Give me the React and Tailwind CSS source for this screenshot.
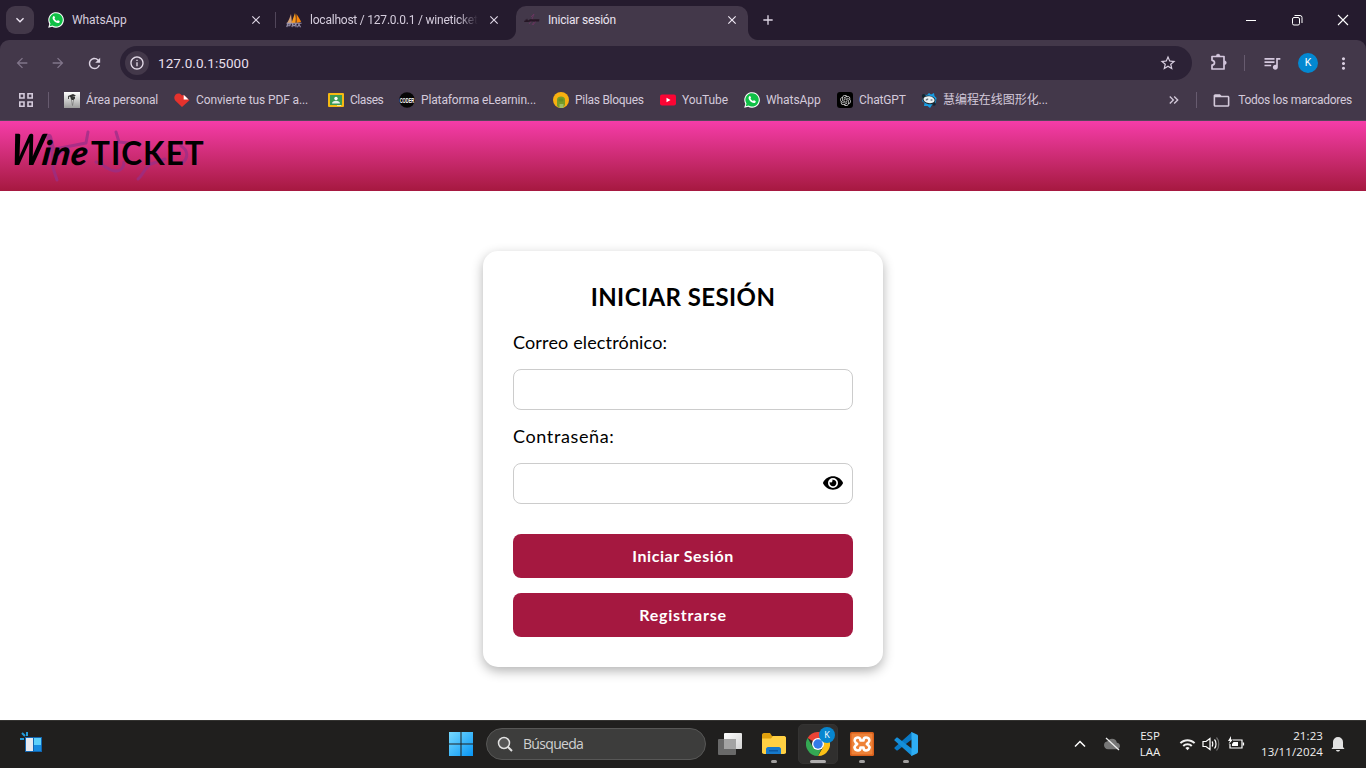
import React from 'react';
import {
  MdArrowBack, MdArrowForward, MdRefresh, MdInfoOutline, MdStarBorder,
  MdQueueMusic, MdMoreVert, MdKeyboardArrowDown, MdClose, MdAdd,
  MdKeyboardDoubleArrowRight, MdFolderOpen, MdWifi, MdCloud,
} from 'react-icons/md';
import { FaEye } from 'react-icons/fa';
import { RiOpenaiFill } from 'react-icons/ri';

const WhatsApp = () => (
  <svg viewBox="0 0 16 16" className="size-4 shrink-0">
    <path d="M0.2 15.8 1.3 11.9A7.8 7.8 0 1 1 4.2 14.8Z" fill="#fff" />
    <path d="M1.7 14.3 2.5 11.6A6.7 6.7 0 1 1 4.6 13.6Z" fill="#10c046" />
    <path d="M5.3 4.2c.5-.5 1-.3 1.2.2l.5 1.1c.1.4-.6.9-.5 1.2.5 1 1.3 1.8 2.4 2.3.4.1.8-.9 1.2-.7l1.4.7c.4.2.2 1-.1 1.4-.8.9-2 .8-3.4.2A7.2 7.2 0 0 1 5 7.4C4.3 6 4.5 5 5.3 4.2Z" fill="#fff" />
  </svg>
);

const PhpMyAdmin = () => (
  <svg viewBox="0 0 16 16" className="size-4 shrink-0">
    <path d="M1 11C3 8 4 5 5 2l1 9Z" fill="#d5a27a" />
    <path d="M5.5 11 9 1c1 3 1 7 .5 10Z" fill="#f79a1c" />
    <path d="M10.5 11V2c2 3 4 6 4.5 8Z" fill="#f98508" />
    <path d="M.8 15.2 1.5 12h2.800l-.5 1.800H1.500M6 15.200 6.500 12l1.500 2L10 12v3.200M11.500 15.200l1.500-3 1.500 3M.5 11.300h15" stroke="#9a93ad" strokeWidth="1.1" fill="none" />
  </svg>
);

const WineFavicon = () => (
  <svg viewBox="0 0 16 16" className="size-4 shrink-0">
    <path d="M7 5l3-3-2 5 4 2-3 4M5 12l3-4M8 13l2-3" stroke="#733565" strokeWidth="1" fill="none" opacity=".7" />
    <path d="M0 10 1.500 7v2L3 6.500l1 2L6 7.200h9.500L15 9.500H6.500L4 10Z" fill="#21101f" opacity=".85" />
  </svg>
);

const GradIcon = () => (
  <svg viewBox="0 0 16 16" className="size-4 shrink-0">
    <defs><linearGradient id="grad-bg" x1="0" y1="0" x2="0" y2="1"><stop stopColor="#fff" /><stop offset="1" stopColor="#9b9b9b" /></linearGradient></defs>
    <rect width="16" height="16" fill="url(#grad-bg)" />
    <path d="M4 4 9 2l3 1.500-5 2ZM6.500 5.500 11 4.500v2L9 8.500 7 7.500Z" fill="#333" />
    <path d="M7.500 8 8.500 13.500 9.500 8" stroke="#777" fill="#ddd" strokeWidth=".8" /><path d="M4.500 4v3" stroke="#444" />
  </svg>
);

const HeartIcon = () => (
  <svg viewBox="0 0 16 16" className="size-4 shrink-0">
    <path d="M8 15 1.200 8.500C-1 5.700 1 1.500 4.500 1.500c1.500 0 2.500.7 3.200 1.700H10l5.500 5Z" fill="#e5322d" />
    <path d="M9.700 2.800 14.500 7.500H9.700Z" fill="#fff" />
  </svg>
);

const ClassroomIcon = () => (
  <svg viewBox="0 0 16 16" className="size-4 shrink-0">
    <rect y="1" width="16" height="14" rx="1" fill="#f4b912" />
    <rect x="2" y="3" width="12" height="10" fill="#3a9a55" />
    <circle cx="8" cy="6.500" r="1.700" fill="#fff" />
    <path d="M4 11.500c0-2 2-2.800 4-2.800s4 .8 4 2.800Z" fill="#e5f2e9" />
    <path d="M9 13h4v1H9Z" fill="#f6e5a4" />
  </svg>
);

const CoderIcon = () => (
  <svg viewBox="0 0 16 16" className="size-4 shrink-0 overflow-visible">
    <circle cx="8" cy="8" r="7.800" fill="#060606" />
    <text x=".7" y="10.500" textLength="14.600" lengthAdjust="spacingAndGlyphs" fontFamily="Liberation Sans" fontWeight="bold" fontSize="7" fill="#fff">CODER</text>
  </svg>
);

const PilasIcon = () => (
  <svg viewBox="0 0 16 16" className="size-4 shrink-0">
    <circle cx="8" cy="8" r="8" fill="#f8b010" />
    <path d="M4 14V7.500c0-4 8-4 8 0V13l-2 2.500H6Z" fill="#769c28" />
    <rect x="5.500" y="6.500" width="5" height="3" rx="1.500" fill="#648f25" />
    <path d="M6.500 12h4v4h-4Z" fill="#9fbd65" />
  </svg>
);

const YouTubeIcon = () => (
  <svg viewBox="0 0 16 16" className="size-4 shrink-0">
    <rect y="2.500" width="16" height="11" rx="2" fill="#fb0534" />
    <path d="M6.500 5.700 10.500 8l-4 2.300Z" fill="#fff" />
  </svg>
);

const PandaIcon = () => (
  <svg viewBox="0 0 16 16" className="size-4 shrink-0">
    <path d="M8 1l2 1.500 3-1.500.5 3L15.500 6 15 9.500l-1 3-3 .5L9 16l-2.500-2L3 14l.5-3L1 9l1-3L3 2.500 6 3Z" fill="#189ce2" />
    <circle cx="2.800" cy="4" r="2" fill="#142531" /><circle cx="13" cy="12" r="1.800" fill="#142531" />
    <ellipse cx="8" cy="7.900" rx="6.600" ry="4.300" transform="rotate(10 8 8)" fill="#1d2830" />
    <ellipse cx="8" cy="7.700" rx="5.600" ry="3.400" transform="rotate(10 8 8)" fill="#e9f0f2" />
    <ellipse cx="6" cy="7.500" rx="1.500" ry=".8" transform="rotate(-25 6 7.500)" fill="#68727a" /><ellipse cx="10.500" cy="8" rx="1.200" ry=".8" fill="#68727a" />
  </svg>
);

const GptIcon = () => (
  <span className="grid size-4 shrink-0 place-items-center rounded-[3px] bg-black"><RiOpenaiFill size={13} color="#d8d8d8" /></span>
);

const PuzzleIcon = () => (
  <svg viewBox="0 0 18 18" className="mt-1 ml-[18px] size-[18px] shrink-0" fill="none" stroke="#d5c8de">
    <path d="M2 3.500H14V16H2V12.200C3.700 12 4.500 11 4.500 9.750S3.700 7.500 2 7.300Z" strokeWidth="1.7" strokeLinejoin="round" />
    <path d="M6.200 3a1.900 1.900 0 0 1 3.800 0ZM14.500 7.800a1.900 1.900 0 0 1 0 3.800Z" fill="#d5c8de" strokeWidth=".4" />
  </svg>
);

const bookmarks = [
  { icon: <GradIcon />, label: 'Área personal', box: 'w-[110px]', text: 'tracking-[-0.14px]' },
  { icon: <HeartIcon />, label: 'Convierte tus PDF a...', box: 'w-[154px]', text: 'tracking-[-0.12px]' },
  { icon: <ClassroomIcon />, label: 'Clases', box: 'w-[71px]', text: 'tracking-[-0.45px]' },
  { icon: <CoderIcon />, label: 'Plataforma eLearnin...', box: 'w-[154px]', text: 'tracking-[-0.14px]' },
  { icon: <PilasIcon />, label: 'Pilas Bloques', box: 'w-[107px]', text: 'tracking-[-0.28px]' },
  { icon: <YouTubeIcon />, label: 'YouTube', box: 'w-[84px]', text: 'tracking-[-0.08px]' },
  { icon: <WhatsApp />, label: 'WhatsApp', box: 'w-[93px]', text: 'tracking-[-0.08px]' },
  { icon: <GptIcon />, label: 'ChatGPT', box: 'w-[84px]', text: 'tracking-[-0.14px]' },
  { icon: <PandaIcon />, label: '慧编程在线图形化...', box: 'w-[140px]', text: 'tracking-[-0.05px]' },
];

const TabStrip = () => (
  <div className="flex h-10 items-center bg-[#251b2e] text-xs text-[#d5cddd]">
    <div className="ml-1.5 grid h-7 w-7 place-items-center rounded-[9px] bg-[#433849]"><MdKeyboardArrowDown size={16} color="#eee6f4" /></div>
    <div className="ml-3.5 flex w-[228px] items-center">
      <WhatsApp />
      <span className="ml-2 flex-1 tracking-[-0.08px]">WhatsApp</span>
      <MdClose size={14} className="mr-[13px]" color="#ded6e5" />
    </div>
    <div className="-ml-px h-4 w-px bg-[#51465a]" />
    <div className="ml-2.5 flex w-[230px] items-center">
      <PhpMyAdmin />
      <span className="ml-2 w-[168px] shrink-0 whitespace-nowrap tracking-[-0.22px] [mask-image:linear-gradient(to_right,#000_88%,transparent)]">localhost / 127.0.0.1 / wineticket</span>
      <MdClose size={14} className="ml-[9px] shrink-0" color="#ded6e5" />
    </div>
    <div className="relative flex h-[34px] w-[232px] items-center self-end rounded-t-[10px] bg-[#43384a] pb-1.5 pl-2 text-[#eae3ef]">
      <span className="absolute bottom-0 -left-2.5 size-2.5 bg-[radial-gradient(circle_at_0_0,#251b2e_9.5px,#43384a_10.5px)]" />
      <WineFavicon />
      <span className="ml-2 flex-1 tracking-[-0.2px]">Iniciar sesión</span>
      <MdClose size={14} className="mr-[9px]" color="#f0e9f4" />
      <span className="absolute -right-2.5 bottom-0 size-2.5 bg-[radial-gradient(circle_at_100%_0,#251b2e_9.5px,#43384a_10.5px)]" />
    </div>
    <MdAdd size={16} className="ml-3" color="#ded6e5" />
    <div className="ml-auto mr-[17px] flex items-center gap-[34px]">
      <svg className="h-3 w-3" viewBox="0 0 12 12"><path d="M1 6.500h10" stroke="#fff" /></svg>
      <svg className="h-3 w-3" viewBox="0 0 12 12" fill="none" stroke="#fff"><rect x="1.500" y="3.500" width="7" height="7.500" rx="1.500" /><path d="M3.500 1.500H9a2 2 0 0 1 2 2V9" /></svg>
      <svg className="h-3 w-3" viewBox="0 0 12 12"><path d="m1 1 10 10M11 1 1 11" stroke="#fff" strokeWidth="1.1" /></svg>
    </div>
  </div>
);

const Toolbar = () => (
  <div className="bg-[#251b2e]">
    <div className="flex h-10 items-center rounded-t-[9px] bg-[#43384a]">
      <div className="mt-1.5 flex items-center gap-5 pl-3.5 text-[#81758a]">
        <MdArrowBack size={16} /><MdArrowForward size={16} /><MdRefresh size={17} color="#ddd4e3" />
      </div>
      <div className="mt-1.5 ml-[17px] flex h-[34px] w-[1072px] items-center rounded-full bg-[#2c2236] pl-[5px] pr-[15px]">
        <div className="grid size-6 place-items-center rounded-full bg-[#43384a]"><MdInfoOutline size={16} color="#e4dbe9" /></div>
        <span className="ml-[9px] flex-1 text-[13.5px] tracking-[0.08px] text-[#e7dfeb]">127.0.0.1:5000</span>
        <MdStarBorder size={18} color="#d9cfe1" />
      </div>
      <PuzzleIcon />
      <div className="mt-1.5 ml-4 h-4 w-px bg-[#675b6f]" />
      <MdQueueMusic size={20} className="mt-1.5 ml-[17px]" color="#d5c8de" />
      <div className="mt-1.5 ml-4 grid size-5 place-items-center rounded-full bg-[#0388d1] text-[10.5px] text-white">K</div>
      <MdMoreVert size={19} className="mt-1.5 ml-4" color="#d9cee0" />
    </div>
  </div>
);

const BookmarksBar = () => (
  <div className="flex h-[41px] items-center whitespace-nowrap border-b border-[#57465c] bg-[#43384a] text-xs text-[#d4cadb]">
    <svg viewBox="0 0 14 14" className="ml-[19px] size-3.5" fill="none" stroke="#d4cadb" strokeWidth="1.6"><path d="M.8.8h4.200v4.200h-4.200ZM9 .8h4.200v4.200H9ZM.8 9h4.200v4.200h-4.200ZM9 9h4.200v4.200H9Z" /></svg>
    <div className="ml-[15px] h-4 w-px bg-[#675b6f]" />
    <div className="ml-[15px] flex">
      {bookmarks.map((b) => (
        <div key={b.label} className={'flex shrink-0 items-center gap-1.5 ' + b.box}>{b.icon}<span className={b.text}>{b.label}</span></div>
      ))}
    </div>
    <div className="ml-auto flex items-center">
      <MdKeyboardDoubleArrowRight size={16} />
      <div className="ml-3.5 h-4 w-px bg-[#675b6f]" />
      <MdFolderOpen size={19} className="ml-[15px]" />
      <span className="ml-[7px] mr-3.5 tracking-[-0.26px]">Todos los marcadores</span>
    </div>
  </div>
);

const BrandHeader = () => (
  <header className="relative flex h-[70px] items-start bg-gradient-to-b from-[#f63ca9] to-[#a61840] pl-3">
    <svg className="absolute left-10 top-2 h-14 w-40" viewBox="40 129 160 56" fill="none" stroke="#982f87" strokeWidth="3" strokeLinecap="round" strokeLinejoin="round" opacity=".75">
      <path d="M49 137l3 12" strokeWidth="6" />
      <path d="M50 150 86 143l2-11M52 151l1 17 4 12M53 157l14-8M116 132l3 10 18 2M96 162c9 3 13 9 20 9 6 0 8-5 8-9M138 179c5-4 7-12 13-15l14-5M169 146l3 5M181 146c7 4 8 12 1 17" />
    </svg>
    <div className="relative flex h-[60px] items-baseline pt-[7px] leading-[42px] text-black">
      <span className="-ml-1 flex w-[83px] origin-bottom-left -skew-x-[8deg] items-baseline font-['Lato'] italic">
        <span className="inline-block w-[32px] origin-bottom-left scale-x-[.78] text-[43px] font-black">W</span>
        <span className="text-[34px] font-black tracking-[0.8px]">ine</span>
      </span>
      <span className="font-['Lato'] text-[31.5px] font-bold tracking-[1px]">TICKET</span>
    </div>
  </header>
);

const LoginCard = () => (
  <form className="flex h-[416px] w-[400px] flex-col rounded-[15px] bg-white px-[30px] font-['Lato','Open_Sans',sans-serif] text-black shadow-[0_4px_12px_rgba(0,0,0,0.3)]">
    <h1 className="mt-[30px] h-8 text-center text-2xl font-bold leading-8 tracking-[0.42px]">INICIAR SESIÓN</h1>
    <label className="mt-[17px] h-6 text-lg leading-6 tracking-[0.15px]">Correo electrónico:</label>
    <input aria-label="Correo electrónico" className="mt-[15px] h-[41px] rounded-lg border border-[#ccc]" />
    <label className="mt-[14px] h-6 text-lg leading-6 tracking-[0.62px]">Contraseña:</label>
    <div className="mt-[15px] flex h-[41px] items-center justify-end rounded-lg border border-[#ccc] pr-[9px]"><FaEye size={20} className="mb-px" /></div>
    <button type="button" className="mt-[30px] h-11 rounded-lg bg-[#a51840] text-base font-bold tracking-[0.55px] text-white">Iniciar Sesión</button>
    <button type="button" className="mt-[15px] h-11 rounded-lg bg-[#a51840] text-base font-bold tracking-[0.75px] text-white">Registrarse</button>
  </form>
);

const WidgetIcon = () => (
  <svg viewBox="0 0 24 22" className="h-[22px] w-6">
    <path d="M1 8h4M3 2l3 3M8 1v4" stroke="#239bd9" strokeWidth="2" />
    <rect x="6" y="6" width="17" height="15" fill="#1265af" />
    <path d="M7 7h7v13H7Z" fill="#e7e9ef" /><path d="M15 7h7v7h-7Z" fill="#5cd0fb" /><path d="M15 14h7v6h-7Z" fill="#168be0" />
  </svg>
);

const WindowsIcon = () => (
  <svg viewBox="0 0 24 24" className="mr-px size-6">
    <defs><linearGradient id="win" x1="0" y1="0" x2="1" y2="1"><stop stopColor="#77daff" /><stop offset="1" stopColor="#0795f4" /></linearGradient></defs>
    <path d="M0 0h11.500v11.500H0ZM12.500 0H24v11.500H12.500ZM0 12.500h11.500V24H0ZM12.500 12.500H24V24H12.500Z" fill="url(#win)" />
  </svg>
);

const TaskViewIcon = () => (
  <svg viewBox="0 0 24 24" className="size-6">
    <defs><linearGradient id="tv" x1="0" y1="0" x2="1" y2="1"><stop stopColor="#fff" /><stop offset="1" stopColor="#d2d2d2" /></linearGradient></defs>
    <rect x="6" y="1" width="18" height="16" rx="1" fill="url(#tv)" /><rect y="7" width="18" height="16" rx="1" fill="#777" opacity=".85" /><path d="M6 7h12v10H6Z" fill="#a3a3a3" />
  </svg>
);

const ExplorerIcon = () => (
  <svg viewBox="0 0 24 24" className="size-6">
    <path d="M0 3c0-1 .5-2 2-2h6l2 3h12c1 0 2 1 2 2v15H0Z" fill="#dfa00d" />
    <path d="M0 6.500h9l2-2.500h11c1 0 2 1 2 2v14c0 1-.5 2-2 2H2c-1 0-2-1-2-2Z" fill="#ffd043" />
    <path d="M4 22v-5c0-1 1-2 2-2h11c1 0 2 1 2 2v5Z" fill="#1679cb" /><path d="M7 18h9v1.500H7Z" fill="#0b58a3" />
  </svg>
);

const ChromeIcon = () => (
  <svg viewBox="0 0 24 24" className="size-6">
    <path d="M12 12 1.600 6A12 12 0 0 1 22.400 6Z" fill="#ea4335" />
    <path d="M12 6h10.400A12 12 0 0 1 12 24l5.200-9Z" fill="#fbc116" />
    <path d="M1.600 6 6.800 15 12 18l3-.5L12 24A12 12 0 0 1 1.600 6Z" fill="#34a853" />
    <circle cx="12" cy="12" r="6" fill="#fff" /><circle cx="12" cy="12" r="4.700" fill="#337be8" />
  </svg>
);

const XamppIcon = () => (
  <svg viewBox="0 0 24 24" className="size-6">
    <rect width="24" height="24" rx="1.500" fill="#d9601c" /><rect x="1.500" y="1.500" width="21" height="21" rx="1" fill="#ee8238" />
    <path d="M8 5.500C4.500 5.500 3.800 9 5.500 10.500L7.200 12l-1.700 1.500C3.800 15 4.500 18.500 8 18.500c2 0 2.500-1.500 2.500-3h3c0 1.500.5 3 2.500 3 3.500 0 4.200-3.500 2.500-5L16.800 12l1.700-1.500C20.200 9 19.500 5.500 16 5.500c-2 0-2.500 1.500-2.500 3h-3c0-1.500-.5-3-2.500-3Z" fill="none" stroke="#fff" strokeWidth="2.600" strokeLinejoin="round" />
  </svg>
);

const VsCodeIcon = () => (
  <svg viewBox="0 0 24 24" className="size-6">
    <path d="M18 0 .8 15.300c-.6.500-.6 1 0 1.500l1.500 1.400c.5.400 1 .4 1.500 0L19 6.500Z" fill="#0878c4" />
    <path d="M18 24 .8 8.700c-.6-.5-.6-1 0-1.500l1.500-1.400c.5-.4 1-.4 1.500 0L19 17.500Z" fill="#158fda" />
    <path d="m17.500 0 5.500 2.500c.6.300 1 .7 1 1.400v16.200c0 .7-.4 1.100-1 1.400L17.500 24c-.5-.3-.5-.7 0-1V1c-.5-.3-.5-.7 0-1Z" fill="#2eadf3" />
  </svg>
);

const Taskbar = () => (
  <footer className="flex h-12 items-center border-t border-[#343331] bg-[#201f1e] pb-px font-['Open_Sans','Noto_Sans',sans-serif] text-xs text-[#f0f0f0]">
    <div className="ml-[19px] w-[430px] pb-1"><WidgetIcon /></div>
    <WindowsIcon />
    <div className="ml-3 flex h-8 w-[220px] items-center rounded-full border border-[#575756] bg-[#3d3d3c] pl-2.5">
      <svg viewBox="0 0 16 16" className="size-4" fill="none" stroke="#e1e1e1"><circle cx="7" cy="7" r="5.500" strokeWidth="1.5" fill="#555" /><path d="m11 11 4 4" strokeWidth="2" /></svg>
      <span className="ml-2.5 text-sm tracking-[-0.68px] text-[#d0d0d0]">Búsqueda</span>
    </div>
    <div className="ml-3"><TaskViewIcon /></div>
    <div className="relative ml-5"><ExplorerIcon /><i className="absolute -bottom-[7px] left-[9px] h-[3px] w-[6px] rounded-full bg-[#a2a09f]" /></div>
    <div className="relative ml-3 grid size-10 place-items-center rounded-[5px] border border-[#343332] bg-[#302f2e]"><ChromeIcon />
      <span className="absolute right-[2px] top-[2px] grid size-4 place-items-center rounded-full bg-[#0786cf] text-[9px] text-white">K</span>
      <i className="absolute bottom-0 left-[11px] h-[3px] w-4 rounded-full bg-[#b0aeae]" />
    </div>
    <div className="relative ml-3"><XamppIcon /><i className="absolute -bottom-[7px] left-[9px] h-[3px] w-[6px] rounded-full bg-[#a2a09f]" /></div>
    <div className="relative ml-5"><VsCodeIcon /><i className="absolute -bottom-[7px] left-[9px] h-[3px] w-[6px] rounded-full bg-[#a2a09f]" /></div>
    <div className="ml-auto flex items-center pr-[21px]">
      <svg viewBox="0 0 12 12" className="size-3" fill="none" stroke="#fff" strokeWidth="1.5"><path d="m1 8.500 5-5 5 5" /></svg>
      <div className="relative ml-[18px] h-4 w-4"><MdCloud size={16} color="#777" /><svg viewBox="0 0 16 16" className="absolute inset-0"><path d="m2 2 13 12" stroke="#eee" strokeWidth="1.3" /></svg></div>
      <div className="ml-[19px] w-[22px] whitespace-nowrap text-center text-[11.5px] leading-4"><div>ESP</div><div>LAA</div></div>
      <MdWifi size={17} className="ml-[18px]" />
      <svg viewBox="0 0 18 16" className="ml-1.5 h-4 w-[18px]" fill="none" stroke="#fff" strokeWidth="1.2"><path d="M1 5.500h3l4-3v11l-4-3H1ZM10 5.500c1 1 1 4 0 5M12.500 3.500c2 2 2 7 0 9" /><path d="M14.500 1.500c3 3 3 10 0 13" opacity=".35" /></svg>
      <svg viewBox="0 0 18 16" className="ml-[7px] h-4 w-[18px]" fill="none" stroke="#fff" strokeWidth="1.2"><path d="M6 4h9v8H3V8M16.500 6.500v3" /><path d="M6.500 6H11v4H5V8Z" fill="#fff" stroke="none" /><path d="M4 0 1 5h2L1.500 8.500 6 3.500H4Z" fill="#fff" stroke="none" /></svg>
      <div className="ml-[13px] w-[65px] whitespace-nowrap text-right text-[11.5px] leading-4 tracking-[0.1px]"><div className="tracking-[0.1px]">21:23</div><div>13/11/2024</div></div>
      <svg viewBox="0 0 14 16" className="ml-2 h-4 w-3.5" fill="#e1e1e1"><path d="M2 11V6a5 5 0 0 1 10 0v5l1.500 2H.5ZM5 14h4c-.5 2-3.500 2-4 0Z" /></svg>
    </div>
  </footer>
);

export default function App() {
  return (
    <div className="flex h-[768px] w-[1366px] flex-col overflow-hidden bg-white font-['Roboto','Noto_Sans_CJK_SC',sans-serif]">
      <TabStrip />
      <Toolbar />
      <BookmarksBar />
      <BrandHeader />
      <main className="flex flex-1 items-start justify-center pt-[60px]"><LoginCard /></main>
      <Taskbar />
    </div>
  );
}
